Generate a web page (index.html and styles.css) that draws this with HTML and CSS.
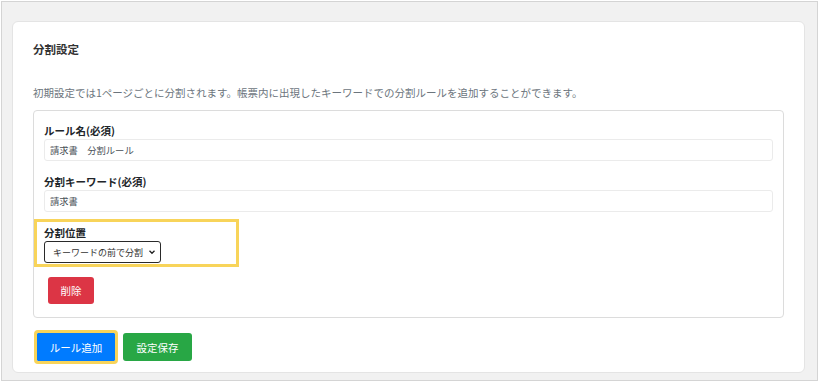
FILE: index.html
```html
<!DOCTYPE html>
<html lang="ja">
<head>
  <meta charset="UTF-8" />
  <meta name="viewport" content="width=device-width, initial-scale=1.0"/>
  <title>分割設定</title>
  <link rel="stylesheet" href="styles.css">
</head>
<body>
  <div class="frame">
    <div class="card">
      <h2 class="card-title">分割設定</h2>
      <p class="note">初期設定では1ページごとに分割されます。帳票内に出現したキーワードでの分割ルールを追加することができます。</p>

      <div class="rule">
        <div class="field">
          <label>ルール名(必須)</label>
          <input type="text" value="請求書　分割ルール">
        </div>
        <div class="field">
          <label>分割キーワード(必須)</label>
          <input type="text" value="請求書">
        </div>
        <div class="field highlight">
          <label>分割位置</label>
          <select>
            <option>キーワードの前で分割</option>
            <option>キーワードの後で分割</option>
          </select>
        </div>
        <button class="btn btn-danger">削除</button>
      </div>

      <div class="actions">
        <button class="btn btn-primary focused">ルール追加</button>
        <button class="btn btn-success">設定保存</button>
      </div>
    </div>
  </div>
</body>
</html>
```

FILE: styles.css
```css
* {
  box-sizing: border-box;
}
body {
  margin: 0;
  font-family: "Noto Sans CJK JP", "Noto Sans", sans-serif;
  color: #212529;
  background: #fff;
}
.frame {
  margin: 1px 2px 0 1px;
  height: 380px;
  border: 1px solid #d4d4d4;
  background: #f1f1f1;
  padding: 19px 12px 0 10px;
}
.card {
  background: #fff;
  border: 1px solid #e4e4e4;
  border-radius: 6px;
  padding: 19px 20px 11px 20px;
}
.card-title {
  margin: 0;
  font-size: 11.5px;
  line-height: 16px;
  font-weight: bold;
  color: #333;
}
.note {
  margin: 28px 0 10px;
  font-size: 10.5px;
  line-height: 15px;
  color: #6c757d;
}
.rule {
  border: 1px solid #dcdcdc;
  border-radius: 4px;
  padding: 12px 10px 13px;
}
.field {
  margin-bottom: 13px;
}
.field label {
  display: block;
  font-size: 10.5px;
  line-height: 15px;
  font-weight: bold;
  color: #212529;
  margin-bottom: 1px;
}
.field input {
  display: block;
  width: 100%;
  height: 22px;
  border: 1px solid #ebebeb;
  border-radius: 3px;
  padding: 0 5px;
  font-family: inherit;
  font-size: 9.3px;
  color: #495057;
  background: #fff;
}
.field select {
  display: block;
  width: 117px;
  height: 22px;
  border: 1px solid #2a2a2a;
  border-radius: 3px;
  padding: 0 11px 0 8px;
  font-family: inherit;
  font-size: 9px;
  color: #333;
  -webkit-appearance: none;
  appearance: none;
  background: #fff url("data:image/svg+xml;utf8,<svg xmlns='http://www.w3.org/2000/svg' width='8' height='8' viewBox='0 0 8 8'><path d='M1.5 2.8 L4 5.3 L6.5 2.8' fill='none' stroke='%23222' stroke-width='1.3'/></svg>") no-repeat right 4px center;
}
.highlight {
  width: 205px;
  margin: -6px 0 0 -10px;
  border: 3px solid #f8d45a;
  padding: 3px 7px 1px;
}
.btn {
  border: none;
  border-radius: 3px;
  color: #fff;
  font-family: inherit;
  font-size: 10.5px;
  height: 28px;
  cursor: pointer;
}
.btn-danger {
  display: block;
  margin: 10px 0 0 4px;
  width: 46px;
  height: 27px;
  background: #dc3545;
}
.actions {
  display: flex;
  gap: 8px;
  margin-top: 15px;
  padding-left: 4px;
}
.btn-primary {
  width: 78px;
  background: #007bff;
}
.btn-primary.focused {
  border-radius: 1px;
  outline: 3px solid #f8d45a;
}
.btn-success {
  width: 69px;
  background: #28a745;
}
```
